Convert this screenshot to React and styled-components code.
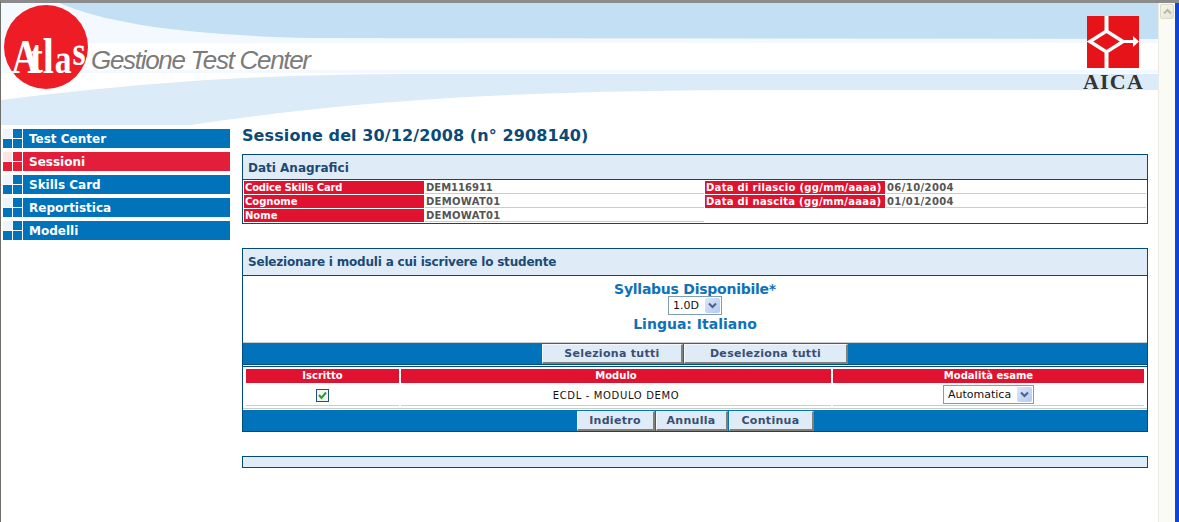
import React from 'react';
import styled, {createGlobalStyle} from 'styled-components';

const GlobalStyle = createGlobalStyle`
  html, body {
    margin: 0;
    padding: 0;
    background: #fff;
    overflow: hidden;
  }
  * {
    box-sizing: border-box;
  }
`;

const Window = styled.div`
  display: flex;
  width: 1179px;
  height: 522px;
  border-top: 3px solid #8b8b8b;
  border-left: 1px solid #6f6f6a;
  font-family: "DejaVu Sans", Verdana, sans-serif;
  overflow: hidden;
`;

const Page = styled.div`
  width: 1157px;
  display: flex;
  flex-direction: column;
`;

const Scrollbar = styled.div`
  width: 17px;
  background: #fbfbf6;
  border-left: 1px solid #ecece6;
  padding: 1px 1px 0 1px;
`;

const ScrollButton = styled.div`
  height: 15px;
  display: flex;
  align-items: center;
  justify-content: center;
  background: linear-gradient(135deg, #f6f5ea, #e6e4d4);
  border: 1px solid #dcdacb;
  border-radius: 2px;
`;

const WindowEdge = styled.div`
  width: 4px;
  background: #0f45d8;
`;

const Header = styled.header`
  position: relative;
  height: 122px;
  display: flex;
  align-items: flex-start;
`;

const Banner = styled.svg`
  position: absolute;
  top: 0;
  left: 0;
`;

const AtlasLogo = styled.svg`
  position: relative;
  flex: none;
  margin: 0 0 0 1px;
  overflow: visible;
`;

const AppName = styled.div`
  position: relative;
  margin: 41px 0 0 1px;
  font-family: "Liberation Sans", Arial, sans-serif;
  font-style: italic;
  font-size: 26px;
  line-height: 32px;
  letter-spacing: -1.3px;
  color: #7b7b7b;
  white-space: nowrap;
`;

const AicaBlock = styled.div`
  position: relative;
  margin: 13px 0 0 auto;
  padding-right: 14px;
  display: flex;
  flex-direction: column;
  align-items: center;
`;

const AicaName = styled.div`
  font-family: "Liberation Serif", "Times New Roman", serif;
  font-size: 22px;
  font-weight: bold;
  line-height: 20px;
  letter-spacing: 1.2px;
  color: #333;
  margin-top: 4px;
`;

const Body = styled.div`
  display: flex;
`;

const Sidebar = styled.nav`
  width: 227px;
  margin-left: 2px;
  padding-top: 4px;
  display: flex;
  flex-direction: column;
  gap: 4px;
`;

const MenuRow = styled.div`
  display: flex;
  height: 19px;
  gap: 1px;
`;

const MenuSquares = styled.div`
  width: 19px;
  display: grid;
  grid-template-columns: 1fr 1fr;
  grid-template-rows: 1fr 1fr;
  gap: 1px;
`;

const MenuSquare = styled.span`
  background: ${p => (p.$pale ? (p.$active ? '#fde3e6' : '#eef5fb') : p.$active ? '#e21e3a' : '#0073ba')};
`;

const MenuLabel = styled.div`
  flex: 1;
  padding: 1px 0 0 6px;
  background: ${p => (p.$active ? '#e21e3a' : '#0073ba')};
  color: #fff;
  font-size: 12px;
  font-weight: bold;
  line-height: 18px;
`;

const Main = styled.main`
  width: 906px;
  margin-left: 12px;
`;

const Title = styled.h1`
  margin: 0 0 8px;
  padding-top: 1px;
  font-size: 16px;
  line-height: 20px;
  letter-spacing: 0.1px;
  font-weight: bold;
  color: #0b4a78;
  white-space: nowrap;
`;

const Panel = styled.section`
  border: 1px solid #004a7c;
  margin-bottom: 24px;
  background: #fff;
`;

const PanelHeader = styled.div`
  height: ${p => p.$height}px;
  line-height: ${p => p.$height - 1}px;
  padding: ${p => p.$drop || 0}px 0 0 5px;
  background: #dfecf8;
  border-bottom: 1px solid #004a7c;
  color: #1c4a74;
  font-size: 12px;
  font-weight: bold;
  letter-spacing: ${p => p.$track || 0}px;
`;

const EmptyStrip = styled.div`
  height: 10px;
  background: #dfecf8;
`;

const InfoGrid = styled.div`
  display: grid;
  grid-template-columns: 180px 279px 180px 260px;
  grid-auto-rows: 13px;
  gap: 1px;
  padding: 1px;
`;

const InfoLabel = styled.div`
  background: #df1230;
  color: #fff;
  font-size: 10px;
  font-weight: bold;
  line-height: 13px;
  padding-left: 1px;
  letter-spacing: ${p => p.$track || 0}px;
  white-space: nowrap;
`;

const InfoValue = styled.div`
  border-bottom: 1px solid #ccc;
  color: #555;
  font-size: 10px;
  font-weight: bold;
  line-height: 13px;
  padding-left: 1px;
  letter-spacing: ${p => p.$track || 0}px;
`;

const ChoiceArea = styled.div`
  height: 66px;
  padding-top: 4px;
  display: flex;
  flex-direction: column;
  align-items: center;
`;

const ChoiceText = styled.div`
  font-size: 14px;
  line-height: 18px;
  font-weight: bold;
  letter-spacing: ${p => p.$track || 0}px;
  color: #0f72b8;
`;

const FakeSelect = styled.div`
  width: ${p => p.$width}px;
  height: 19px;
  margin-top: -2px;
  padding: 1px;
  display: flex;
  justify-content: space-between;
  background: #fff;
  border: 1px solid #7f9db9;
  font-size: 11px;
  line-height: 16px;
  color: #111;
`;

const SelectText = styled.span`
  padding-left: 3px;
`;

const SelectArrow = styled.span`
  width: 15px;
  display: flex;
  align-items: center;
  justify-content: center;
  background: linear-gradient(135deg, #dbe6fb, #b4c8f3);
  border-radius: 2px;
`;

const ActionBar = styled.div`
  height: ${p => p.$height}px;
  display: flex;
  justify-content: center;
  gap: 1px;
  padding-top: 1px;
  background: #0073ba;
  border-top: ${p => (p.$lined ? '1px solid #ccc' : '0')};
  border-bottom: ${p => (p.$lined ? '1px solid #004a7c' : '0')};
`;

const BarButton = styled.button`
  width: ${p => p.$width}px;
  height: 20px;
  padding: 0;
  background: #dfecf8;
  border-style: solid;
  border-width: 1px 2px 2px 1px;
  border-color: #f4f8fc #808078 #808078 #f4f8fc;
  color: #3a4f73;
  font-family: inherit;
  font-size: 11px;
  font-weight: bold;
  line-height: 16px;
  letter-spacing: 0.3px;
`;

const ModuleArea = styled.div`
  margin-top: 1px;
  border-top: 1px solid #004a7c;
  padding-top: 2px;
  height: 44px;
`;

const ModuleGrid = styled.div`
  display: grid;
  grid-template-columns: 153px 430px 311px;
  column-gap: 2px;
  grid-template-rows: 14px 22px;
  row-gap: 1px;
  padding: 0 3px 2px;
  border-bottom: 1px solid #ccc;
`;

const ColumnHead = styled.div`
  background: #df1230;
  color: #fff;
  font-size: 10px;
  font-weight: bold;
  line-height: 14px;
  text-align: center;
`;

const ColumnCell = styled.div`
  display: flex;
  align-items: center;
  justify-content: center;
  padding-top: 2px;
  border-bottom: 1px solid #ccc;
  font-size: 10px;
  letter-spacing: ${p => p.$track || 0}px;
  color: #111;
`;

const Checkbox = styled.span`
  width: 13px;
  height: 13px;
  display: flex;
  align-items: center;
  justify-content: center;
  border: 1px solid #1c5180;
  background: #f4f4ee;
`;

function Arrow() {
  return (
    <svg width="9" height="7" viewBox="0 0 9 7">
      <path d="M1 1.5 L4.5 5 L8 1.5" fill="none" stroke="#4d6185" strokeWidth="2" />
    </svg>
  );
}

function Squares({active}) {
  return (
    <MenuSquares>
      <MenuSquare $pale $active={active} />
      <MenuSquare $active={active} />
      <MenuSquare $active={active} />
      <MenuSquare $active={active} />
    </MenuSquares>
  );
}

const menu = ['Test Center', 'Sessioni', 'Skills Card', 'Reportistica', 'Modelli'];

function App() {
  return (
    <Window>
      <GlobalStyle />
      <Page>
        <Header>
          <Banner width="1157" height="122" viewBox="0 0 1157 122">
            <rect width="1157" height="122" fill="#fff" />
            <path d="M0 0 H1157 V70 H0 Z" fill="#f3f9fe" />
            <rect x="86" y="40" width="1071" height="27" fill="#fff" />
            <path d="M58 0 C110 22 190 32 310 35 L1157 36 V0 Z" fill="#c2dff4" />
            <path d="M0 97 C120 82 240 71 420 71 L1157 71 V87 L800 87 C600 87 400 90 190 122 L0 122 Z" fill="#dcebf8" />
          </Banner>
          <AtlasLogo width="88" height="88" viewBox="0 0 88 88">
            <circle cx="44" cy="44" r="42" fill="#ee1c25" />
            <g transform="scale(0.8 1)">
              <text fontFamily="'Liberation Serif', serif" fontWeight="bold" fill="#fff">
                <tspan x="12" y="70" fontSize="48">A</tspan>
                <tspan x="35" y="70" fontSize="48">t</tspan>
                <tspan x="51" y="70" fontSize="50">l</tspan>
                <tspan x="66" y="70" fontSize="42">a</tspan>
                <tspan x="88" y="62" fontSize="42">s</tspan>
              </text>
            </g>
          </AtlasLogo>
          <AppName>Gestione Test Center</AppName>
          <AicaBlock>
            <svg width="52" height="52" viewBox="0 0 52 52">
              <rect width="52" height="52" fill="#e61419" />
              <path d="M19.5 0 V15 M19.5 37 V52" stroke="#fff" strokeWidth="4" fill="none" />
              <path d="M3 25.5 L19.5 15 L36 25.5 L19.5 36 Z" stroke="#fff" strokeWidth="3.5" fill="none" />
              <path d="M36 25.5 H50" stroke="#fff" strokeWidth="3" />
              <path d="M46 20 L52 25.5 L46 31 Z" fill="#fff" />
            </svg>
            <AicaName>AICA</AicaName>
          </AicaBlock>
        </Header>
        <Body>
          <Sidebar>
            {menu.map(label => (
              <MenuRow key={label}>
                <Squares active={label === 'Sessioni'} />
                <MenuLabel $active={label === 'Sessioni'}>{label}</MenuLabel>
              </MenuRow>
            ))}
          </Sidebar>
          <Main>
            <Title>Sessione del 30/12/2008 (n° 2908140)</Title>
            <Panel>
              <PanelHeader $height={25} $drop={1}>Dati Anagrafici</PanelHeader>
              <InfoGrid>
                <InfoLabel $track={-0.2}>Codice Skills Card</InfoLabel>
                <InfoValue>DEM116911</InfoValue>
                <InfoLabel $track={0.3}>Data di rilascio (gg/mm/aaaa)</InfoLabel>
                <InfoValue $track={0.4}>06/10/2004</InfoValue>
                <InfoLabel>Cognome</InfoLabel>
                <InfoValue $track={0.3}>DEMOWAT01</InfoValue>
                <InfoLabel $track={0.3}>Data di nascita (gg/mm/aaaa)</InfoLabel>
                <InfoValue $track={0.4}>01/01/2004</InfoValue>
                <InfoLabel>Nome</InfoLabel>
                <InfoValue $track={0.3}>DEMOWAT01</InfoValue>
              </InfoGrid>
            </Panel>
            <Panel>
              <PanelHeader $height={27} $track={-0.2}>Selezionare i moduli a cui iscrivere lo studente</PanelHeader>
              <ChoiceArea>
                <ChoiceText $track={-0.25}>Syllabus Disponibile*</ChoiceText>
                <FakeSelect $width={54}>
                  <SelectText>1.0D</SelectText>
                  <SelectArrow><Arrow /></SelectArrow>
                </FakeSelect>
                <ChoiceText>Lingua: Italiano</ChoiceText>
              </ChoiceArea>
              <ActionBar $height={23} $lined>
                <BarButton $width={141}>Seleziona tutti</BarButton>
                <BarButton $width={164}>Deseleziona tutti</BarButton>
              </ActionBar>
              <ModuleArea>
                <ModuleGrid>
                  <ColumnHead>Iscritto</ColumnHead>
                  <ColumnHead>Modulo</ColumnHead>
                  <ColumnHead>Modalità esame</ColumnHead>
                  <ColumnCell>
                    <Checkbox>
                      <svg width="11" height="11" viewBox="0 0 11 11">
                        <path d="M2 5 L4.5 8 L9 2.5" fill="none" stroke="#21a121" strokeWidth="2" />
                      </svg>
                    </Checkbox>
                  </ColumnCell>
                  <ColumnCell $track={0.65}>ECDL - MODULO DEMO</ColumnCell>
                  <ColumnCell>
                    <FakeSelect $width={91}>
                      <SelectText>Automatica</SelectText>
                      <SelectArrow><Arrow /></SelectArrow>
                    </FakeSelect>
                  </ColumnCell>
                </ModuleGrid>
              </ModuleArea>
              <ActionBar $height={21}>
                <BarButton $width={78}>Indietro</BarButton>
                <BarButton $width={72}>Annulla</BarButton>
                <BarButton $width={85}>Continua</BarButton>
              </ActionBar>
            </Panel>
            <Panel>
              <EmptyStrip />
            </Panel>
          </Main>
        </Body>
      </Page>
      <Scrollbar>
        <ScrollButton>
          <svg width="9" height="7" viewBox="0 0 9 7">
            <path d="M1 5.5 L4.5 2 L8 5.5" fill="none" stroke="#b9b8a8" strokeWidth="2" />
          </svg>
        </ScrollButton>
      </Scrollbar>
      <WindowEdge />
    </Window>
  );
}

export default App;
